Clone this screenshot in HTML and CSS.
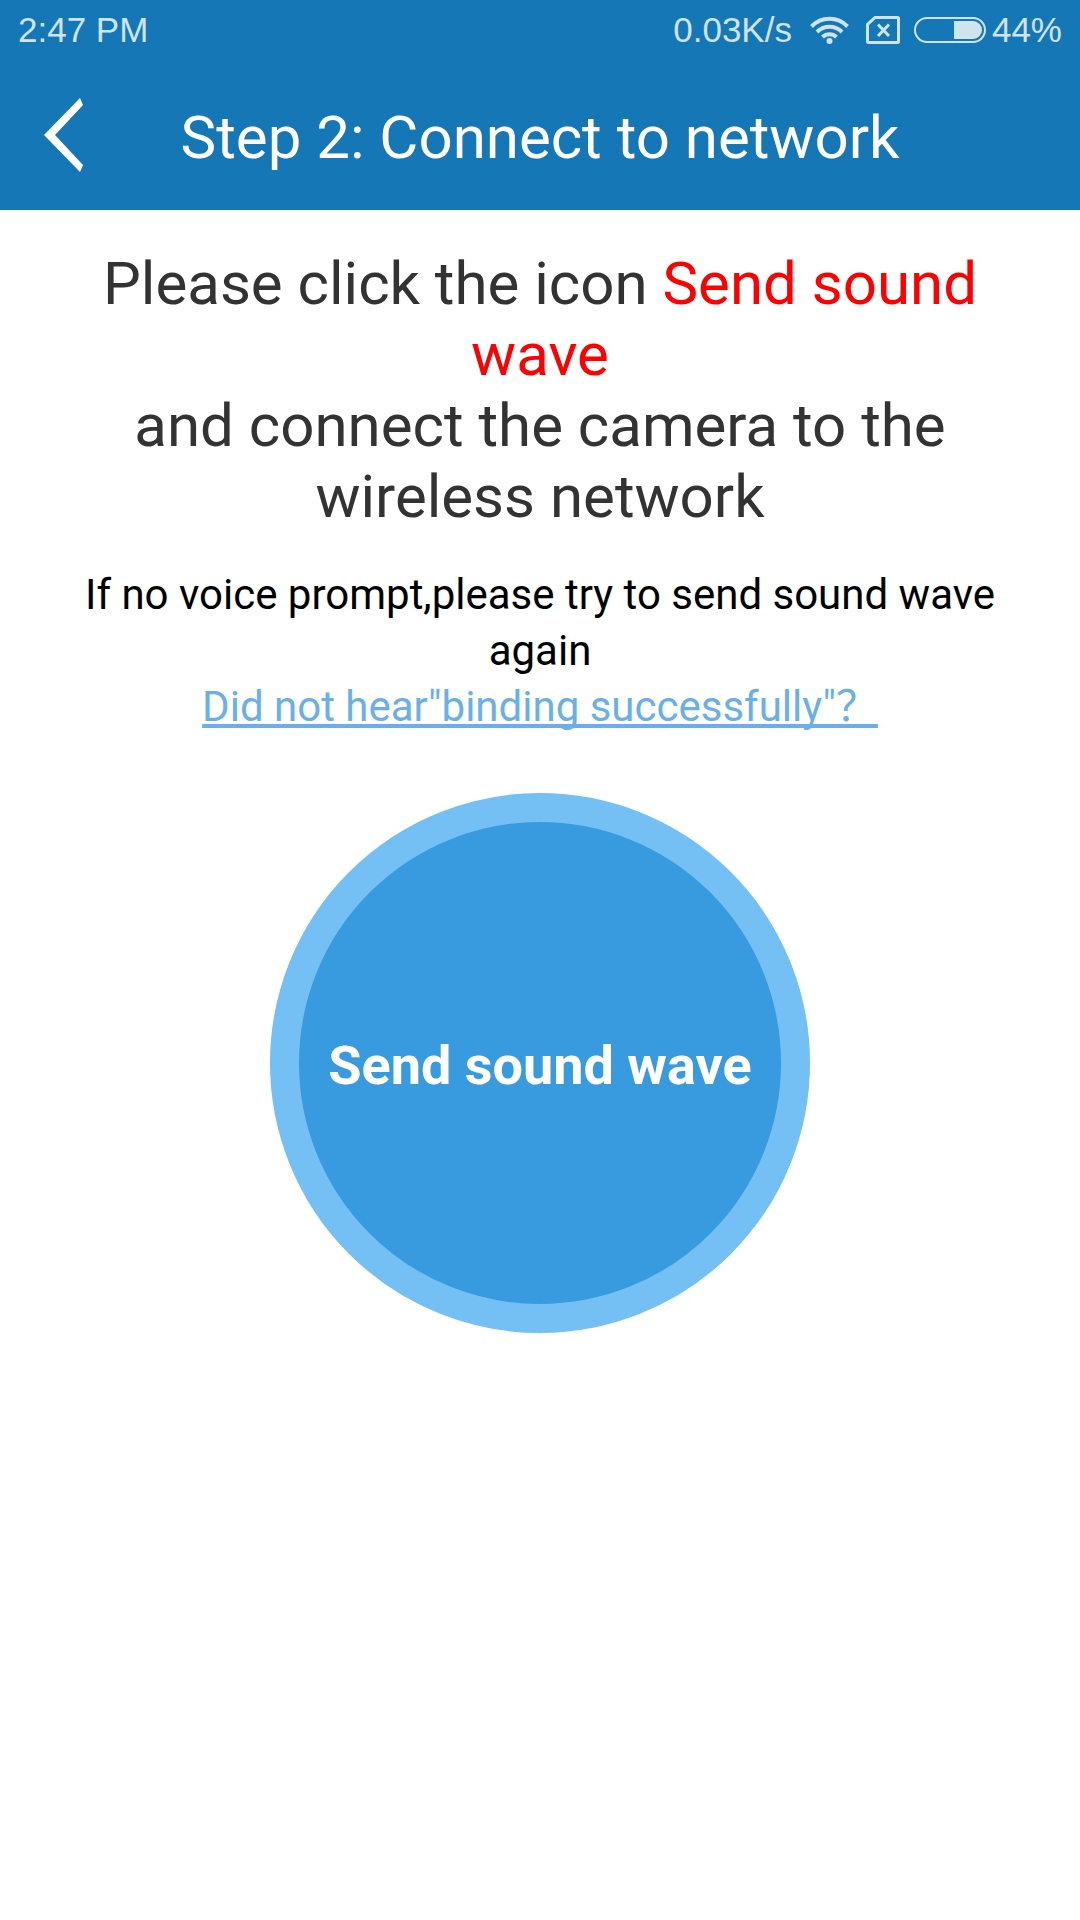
FILE: index.html
```html
<!doctype html>
<html lang="en">
  <head>
    <meta charset="utf-8" />
    <meta name="viewport" content="width=device-width, initial-scale=1" />
    <title>Step 2: Connect to network</title>
    <link rel="stylesheet" href="styles.css" />
  </head>
  <body>
    <header class="top">
      <div class="status-bar">
        <span class="clock">2:47 PM</span>
        <div class="status-icons">
          <span class="speed">0.03K/s</span>
          <svg class="wifi" width="39" height="28" viewBox="0 0 39 28" aria-hidden="true">
            <g fill="none" stroke="currentColor" stroke-width="4">
              <path d="M1.5 10.5a25 25 0 0 1 36 0" />
              <path d="M7 16a17.5 17.5 0 0 1 25 0" />
              <path d="M12.5 21a10 10 0 0 1 14 0" />
            </g>
            <circle cx="19.5" cy="25" r="3" fill="currentColor" />
          </svg>
          <svg class="sim" width="34" height="28" viewBox="0 0 34 28" aria-hidden="true">
            <path d="M9 1.5h22.5a1 1 0 0 1 1 1v23a1 1 0 0 1-1 1h-29a1 1 0 0 1-1-1V8.5z" fill="none" stroke="currentColor" stroke-width="3" />
            <path d="M12 8.5l11 11.500M23 8.5l-11 11.500" stroke="currentColor" stroke-width="3" />
          </svg>
          <svg class="battery" width="72" height="26" viewBox="0 0 72 26" aria-hidden="true">
            <rect x="1" y="1" width="70" height="24" rx="12" fill="none" stroke="currentColor" stroke-width="2" />
            <path d="M40 4h19a9 9 0 0 1 0 18h-19z" fill="currentColor" />
          </svg>
          <span class="percent">44%</span>
        </div>
      </div>
      <div class="title-bar">
        <button class="back-btn" type="button" aria-label="Back">
          <svg width="40" height="76" viewBox="0 0 40 76" aria-hidden="true">
            <path d="M36 1l3 7L11 38l28 30-3 7L0 38z" fill="currentColor" />
          </svg>
        </button>
        <h1 class="title">Step 2: Connect to network</h1>
      </div>
    </header>

    <main class="content">
      <p class="guide">
        Please click the icon <span class="highlight">Send sound wave</span><br />
        and connect the camera to the wireless network
      </p>
      <p class="hint">If no voice prompt,please try to send sound wave again</p>
      <a class="help-link" href="#">Did not hear"binding successfully"？</a>
      <button class="send-btn" type="button">Send sound wave</button>
    </main>
  </body>
</html>
```
FILE: styles.css
```css
* {
  margin: 0;
  padding: 0;
  box-sizing: border-box;
}

body {
  min-height: 100vh;
  background: #fff;
  font-family: Roboto, "Noto Sans CJK SC", sans-serif;
}

.top {
  background: #1677b6;
  color: #fff;
}

.status-bar {
  display: flex;
  justify-content: space-between;
  align-items: center;
  height: 60px;
  padding: 0 18px;
  color: #d0e4f0;
  font-family: "Liberation Sans", sans-serif;
  font-size: 35px;
}

.status-icons {
  display: flex;
  align-items: center;
}

.wifi {
  margin-left: 18px;
}

.sim {
  margin-left: 17px;
}

.battery {
  margin: 0 6px 0 14px;
}

.title-bar {
  display: flex;
  align-items: center;
  height: 150px;
  padding: 0 44px;
}

.back-btn {
  display: flex;
  width: 40px;
  background: none;
  border: none;
  color: #fff;
  cursor: pointer;
}

.title {
  flex: 1;
  margin-right: 40px;
  padding-top: 4px;
  font-size: 60px;
  font-weight: 400;
  text-align: center;
}

.content {
  display: flex;
  flex-direction: column;
  align-items: center;
  padding: 38px 60px;
  text-align: center;
}

.guide {
  color: #333;
  font-size: 60px;
  line-height: 71px;
}

.highlight {
  color: #f00;
}

.hint,
.help-link {
  font-size: 42px;
  line-height: 56px;
}

.hint {
  margin-top: 35px;
  color: #000;
}

.help-link {
  color: #69b0ea;
  text-decoration-skip-ink: none;
}

.send-btn {
  width: 540px;
  height: 540px;
  margin-top: 58px;
  padding-top: 4px;
  background: #399bdf;
  border: 29px solid #74c0f4;
  border-radius: 50%;
  color: #fff;
  font-family: inherit;
  font-size: 54px;
  font-weight: 700;
  cursor: pointer;
}
```
